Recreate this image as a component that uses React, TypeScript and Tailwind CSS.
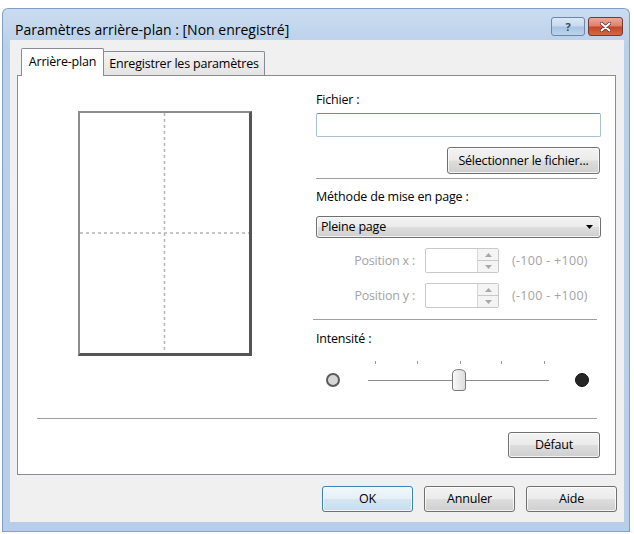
import React from 'react';

const face =
  'bg-[linear-gradient(to_bottom,#f3f3f3_0%,#ebebeb_48%,#dddddd_52%,#cfcfcf_100%)]';

function Button({
  label,
  className = '',
  primary = false,
}: {
  label: string;
  className?: string;
  primary?: boolean;
}) {
  return (
    <div
      className={`flex items-center justify-center rounded-[3px] border text-black shadow-[inset_0_0_0_1px_rgba(255,255,255,0.75)] ${
        primary
          ? 'border-[#3c7fb1] bg-[linear-gradient(to_bottom,#f1f7fc_0%,#e6f0f8_48%,#d5e5f2_52%,#c9ddee_100%)]'
          : `border-[#707070] ${face}`
      } ${className}`}
    >
      {label}
    </div>
  );
}

function SpinBox() {
  return (
    <div className="flex h-[25px] w-[74px] rounded-[2px] border border-[#c9c9c9] bg-white">
      <div className="flex-1" />
      <div className="flex w-[21px] flex-col border-l border-[#d6d6d6] bg-[#f4f4f4]">
        <div className="flex flex-1 items-center justify-center border-b border-[#c9c9c9]">
          <svg width="7" height="4" viewBox="0 0 7 4">
            <path d="M0 4 L3.5 0 L7 4 Z" fill="#a8a8a8" />
          </svg>
        </div>
        <div className="flex flex-1 items-center justify-center">
          <svg width="7" height="4" viewBox="0 0 7 4">
            <path d="M0 0 L3.5 4 L7 0 Z" fill="#a8a8a8" />
          </svg>
        </div>
      </div>
    </div>
  );
}

function PositionRow({ label }: { label: string }) {
  return (
    <div className="flex h-[25px] items-center text-[#a3a3a3]">
      <div className="w-[99px] text-right">{label}</div>
      <div className="ml-[10px]">
        <SpinBox />
      </div>
      <div className="ml-[13px] tracking-[0.3px]">(-100 - +100)</div>
    </div>
  );
}

function Separator({ className = '' }: { className?: string }) {
  return <div className={`h-0 border-t border-b border-t-[#a0a0a0] border-b-white ${className}`} />;
}

function Slider() {
  const ticks = [7, 49, 92, 133, 176];
  return (
    <svg width="181" height="34" viewBox="0 0 181 34">
      {ticks.map((x) => (
        <line key={x} x1={x + 0.5} y1="4" x2={x + 0.5} y2="7" stroke="#9a9a9a" strokeWidth="1" />
      ))}
      <line x1="0" y1="23.5" x2="181" y2="23.5" stroke="#8c8c8c" strokeWidth="1" />
      <line x1="0" y1="24.5" x2="181" y2="24.5" stroke="#ffffff" strokeWidth="1" />
      <defs>
        <linearGradient id="thumb" x1="0" y1="0" x2="1" y2="0">
          <stop offset="0" stopColor="#fafafa" />
          <stop offset="1" stopColor="#dcdcdc" />
        </linearGradient>
      </defs>
      <path
        d="M84.5 17 Q84.5 12.5 91 12.5 Q97.5 12.5 97.5 17 L97.5 31 Q97.5 33.5 95 33.5 L87 33.5 Q84.5 33.5 84.5 31 Z"
        fill="url(#thumb)"
        stroke="#7a7a7a"
        strokeWidth="1"
      />
    </svg>
  );
}

export default function App() {
  return (
    <div className="h-[534px] w-[634px] bg-white pl-[2px] pt-[8px] font-['Open_Sans','Noto_Sans',sans-serif]">
      <div className="flex h-[524px] w-[628px] flex-col rounded-t-[6px] border border-[#7f9fc8] border-b-[#43c2e0] bg-[linear-gradient(to_bottom,#cadcf0_0px,#b9d0e9_40px,#b6cee9_100%)]">
        {/* title bar */}
        <div className="flex h-[31px] items-start pl-[12px] pr-[6px]">
          <div className="mt-[11px] text-[14px] leading-[19px] text-black">
            Paramètres arrière-plan : [Non enregistré]
          </div>
          <div className="flex-1" />
          <div className="mt-[8px] flex gap-[3px]">
            <div className="flex h-[19px] w-[34px] items-center justify-center rounded-[3px] border border-[#6c86a6] bg-[linear-gradient(to_bottom,#dbe8f5_0%,#c6d9ee_48%,#a9c3e2_52%,#bcd3ec_100%)]">
              <span className="text-[11px] font-bold leading-none text-[#3a4a60]">?</span>
            </div>
            <div className="flex h-[19px] w-[35px] items-center justify-center rounded-[3px] border border-[#733a30] bg-[linear-gradient(to_bottom,#eaa99c_0%,#de8068_48%,#c8452b_52%,#d2683e_100%)]">
              <svg width="11" height="10" viewBox="0 0 11 10">
                <path d="M1.5 1.5 L9.5 8.5 M9.5 1.5 L1.5 8.5" stroke="#5a2a22" strokeWidth="3.4" strokeLinecap="round" />
                <path d="M1.5 1.5 L9.5 8.5 M9.5 1.5 L1.5 8.5" stroke="#ffffff" strokeWidth="2" strokeLinecap="round" />
              </svg>
            </div>
          </div>
        </div>

        {/* client area */}
        <div className="ml-[7px] flex h-[482px] w-[614px] flex-col bg-[#f0f0f0] px-[7px] pt-[8px] text-[12.5px] leading-[16px] tracking-[-0.2px] text-black">
          {/* tabs */}
          <div className="flex h-[27px] items-start pl-[4px]">
            <div className="relative z-10 flex h-[28px] w-[83px] items-center justify-center rounded-t-[2px] border border-b-0 border-[#898c95] bg-white pb-[1px]">
              Arrière-plan
            </div>
            <div className="-ml-px mt-[3px] flex h-[24px] w-[162px] items-center justify-center rounded-t-[2px] border border-b-0 border-[#898c95] bg-[linear-gradient(to_bottom,#f3f3f3,#e3e3e3)]">
              Enregistrer les paramètres
            </div>
          </div>

          {/* panel */}
          <div className="flex h-[400px] w-[599px] flex-col border border-[#898c95] bg-white">
            <div className="flex h-[342px]">
              <div className="w-[298px]">
                <div className="ml-[60px] mt-[35px] h-[245px] w-[174px] border-2 border-[#8c8c8c] border-b-[3px] border-r-[3px] border-b-[#555555] border-r-[#555555]">
                  <svg width="100%" height="100%">
                    <line x1="50%" y1="0" x2="50%" y2="100%" stroke="#b4b4b4" strokeWidth="1.5" strokeDasharray="3 3" />
                    <line x1="0" y1="50%" x2="100%" y2="50%" stroke="#b4b4b4" strokeWidth="1.5" strokeDasharray="3 3" />
                  </svg>
                </div>
              </div>

              <div className="flex w-[285px] flex-col">
                <div className="mt-[16px]">Fichier :</div>
                <div className="mt-[5px] h-[24px] w-[285px] rounded-[2px] border border-[#a9bed8] border-t-[#6d8db5] bg-white" />
                <Button label="Sélectionner le fichier..." className="mr-[1px] mt-[10px] h-[27px] w-[153px] self-end" />
                <Separator className="mt-[4px] w-[281px]" />
                <div className="mt-[9px]">Méthode de mise en page :</div>
                <div
                  className={`mt-[11px] flex h-[22px] w-[285px] items-center rounded-[3px] border border-[#707070] pl-[4px] pr-[7px] shadow-[inset_0_0_0_1px_rgba(255,255,255,0.75)] ${face}`}
                >
                  <span className="flex-1">Pleine page</span>
                  <svg width="7" height="4" viewBox="0 0 7 4">
                    <path d="M0 0 L7 0 L3.5 4 Z" fill="#000000" />
                  </svg>
                </div>
                <div className="mt-[10px]">
                  <PositionRow label="Position x :" />
                </div>
                <div className="mt-[10px]">
                  <PositionRow label="Position y :" />
                </div>
                <Separator className="-ml-[3px] mt-[11px] w-[284px]" />
                <div className="mt-[10px]">Intensité :</div>
                <div className="mt-[10px] flex items-start">
                  <div className="ml-[10px] mt-[16px] h-[14px] w-[14px] rounded-full border-2 border-[#5a5a5a] bg-[#d6d6d6]" />
                  <div className="ml-[28px]">
                    <Slider />
                  </div>
                  <div className="ml-[26px] mt-[16px] h-[14px] w-[14px] rounded-full border border-[#111111] bg-[#262626]" />
                </div>
              </div>
            </div>

            <Separator className="ml-[19px] w-[560px]" />
            <Button label="Défaut" className="mr-[15px] mt-[12px] h-[26px] w-[92px] self-end" />
          </div>

          {/* dialog buttons */}
          <div className="mt-[11px] flex justify-end gap-[11px]">
            <Button label="OK" primary className="h-[26px] w-[91px]" />
            <Button label="Annuler" className="h-[26px] w-[91px]" />
            <Button label="Aide" className="h-[26px] w-[91px]" />
          </div>
        </div>
      </div>
    </div>
  );
}
